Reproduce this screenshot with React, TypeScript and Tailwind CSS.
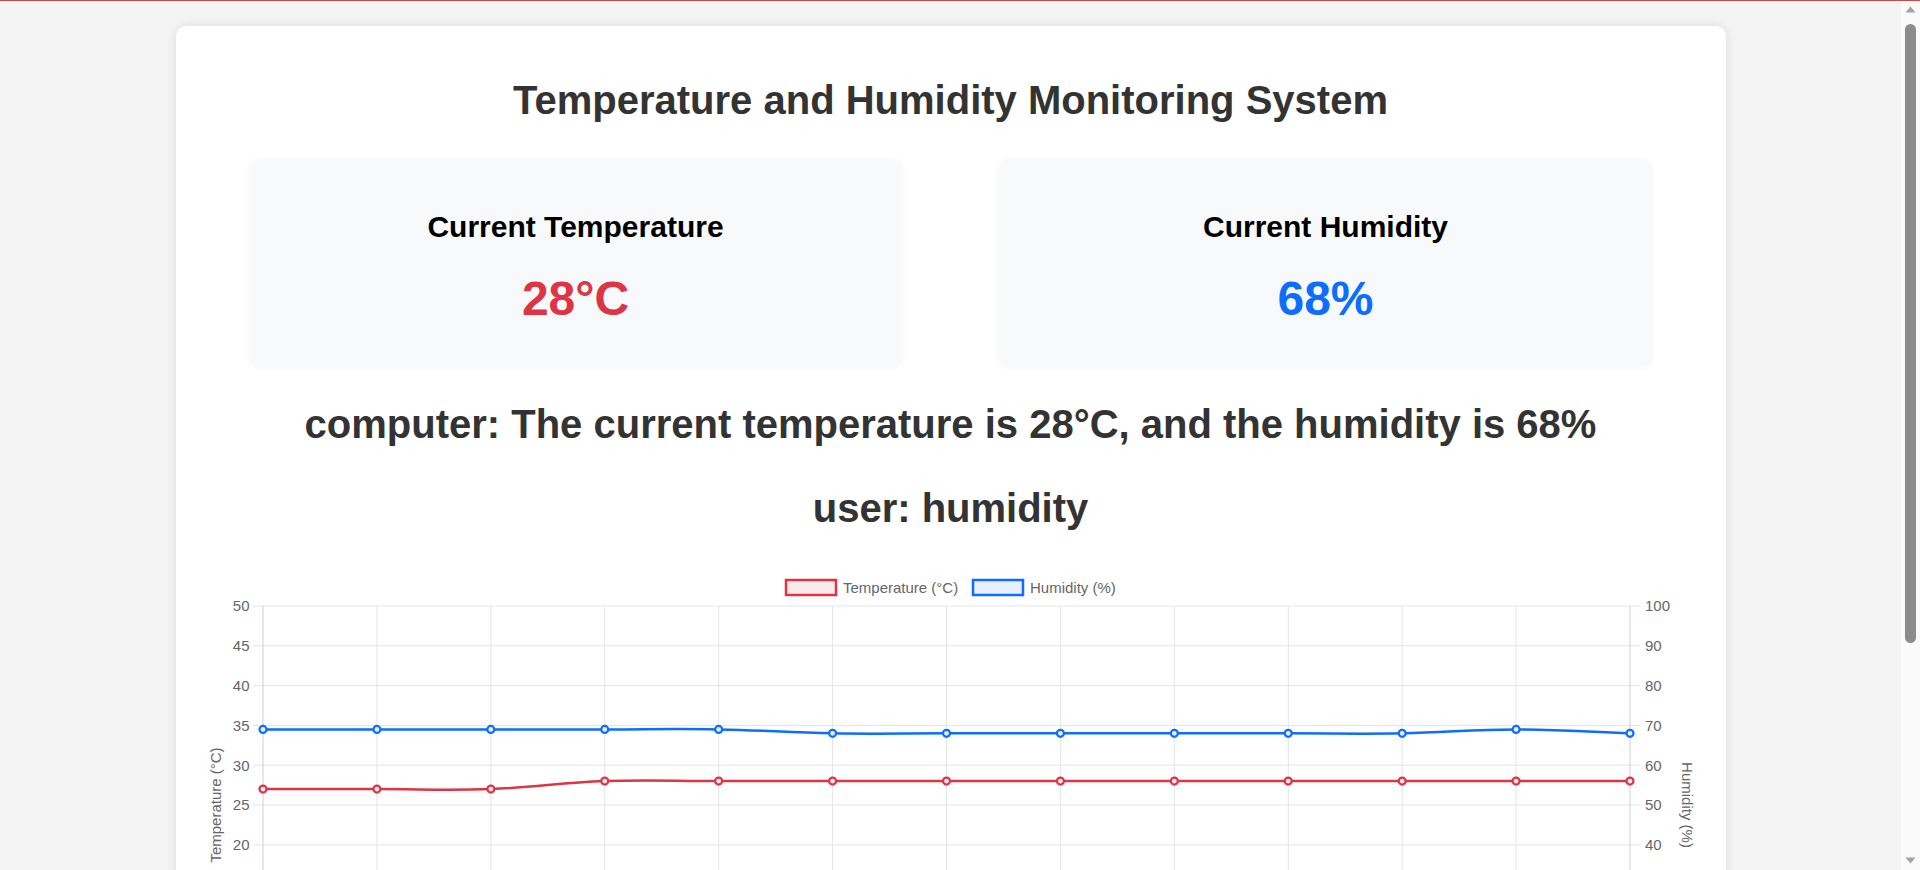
import React from "react";

type Pt = { x: number; y: number };

const temps = [27, 27, 27, 28, 28, 28, 28, 28, 28, 28, 28, 28, 28];
const hums = [69, 69, 69, 69, 69, 68, 68, 68, 68, 68, 68, 69, 68];
const times = [
  "14:20:01", "14:20:06", "14:20:11", "14:20:16", "14:20:21", "14:20:26", "14:20:31",
  "14:20:36", "14:20:41", "14:20:46", "14:20:51", "14:20:56", "14:21:01",
];

const X0 = 62;
const X1 = 1429;
const Y0 = 46;
const STEP = 39.8;
const Y1 = Y0 + STEP * 10;
const DX = (X1 - X0) / 12;

function splinePath(pts: Pt[], t = 0.4): string {
  const cps = pts.map((p, i) => {
    const prev = pts[i - 1] ?? p;
    const next = pts[i + 1] ?? p;
    const d01 = Math.hypot(p.x - prev.x, p.y - prev.y);
    const d12 = Math.hypot(next.x - p.x, next.y - p.y);
    let s01 = d01 / (d01 + d12);
    let s12 = d12 / (d01 + d12);
    if (isNaN(s01)) s01 = 0;
    if (isNaN(s12)) s12 = 0;
    const fa = t * s01;
    const fb = t * s12;
    return {
      c1: { x: p.x - fa * (next.x - prev.x), y: p.y - fa * (next.y - prev.y) },
      c2: { x: p.x + fb * (next.x - prev.x), y: p.y + fb * (next.y - prev.y) },
    };
  });
  let d = `M${pts[0].x},${pts[0].y}`;
  for (let i = 1; i < pts.length; i++) {
    const a = cps[i - 1].c2;
    const b = cps[i].c1;
    d += ` C${a.x},${a.y} ${b.x},${b.y} ${pts[i].x},${pts[i].y}`;
  }
  return d;
}

function Chart() {
  const tPts = temps.map((v, i) => ({ x: X0 + i * DX, y: Y0 + ((50 - v) / 5) * STEP }));
  const hPts = hums.map((v, i) => ({ x: X0 + i * DX, y: Y0 + ((100 - v) / 10) * STEP }));
  const font = "'Liberation Sans', Arial, sans-serif";
  return (
    <svg width={1500} height={564} viewBox="0 0 1500 564" className="block" style={{ fontFamily: font }}>
      {/* legend */}
      <rect x={585} y={20} width={50} height={15} fill="rgba(220,53,69,0.1)" stroke="#dc3545" strokeWidth={2.5} />
      <text x={642} y={32.5} fontSize={15} fill="#666">Temperature (°C)</text>
      <rect x={772} y={20} width={50} height={15} fill="rgba(13,110,253,0.1)" stroke="#0d6efd" strokeWidth={2.5} />
      <text x={829} y={32.5} fontSize={15} fill="#666">Humidity (%)</text>

      {/* horizontal grid */}
      {Array.from({ length: 11 }).map((_, k) => (
        <line key={"h" + k} x1={52} x2={1439} y1={Y0 + k * STEP} y2={Y0 + k * STEP} stroke="#e5e5e5" strokeWidth={1} />
      ))}
      {/* vertical grid */}
      {Array.from({ length: 13 }).map((_, i) => (
        <line
          key={"v" + i}
          x1={X0 + i * DX}
          x2={X0 + i * DX}
          y1={Y0}
          y2={Y1 + 10}
          stroke={i === 0 || i === 12 ? "#d0d0d0" : "#e5e5e5"}
          strokeWidth={1}
        />
      ))}
      <line x1={X0} x2={X1} y1={Y1} y2={Y1} stroke="#d0d0d0" strokeWidth={1} />

      {/* left ticks */}
      {Array.from({ length: 11 }).map((_, k) => (
        <text key={"l" + k} x={48.5} y={Y0 + k * STEP + 5.3} fontSize={15} fill="#666" textAnchor="end">
          {50 - k * 5}
        </text>
      ))}
      {/* right ticks */}
      {Array.from({ length: 11 }).map((_, k) => (
        <text key={"r" + k} x={1444} y={Y0 + k * STEP + 5.3} fontSize={15} fill="#666">
          {100 - k * 10}
        </text>
      ))}
      {/* x ticks */}
      {times.map((t, i) => (
        <text key={"x" + i} x={X0 + i * DX} y={Y1 + 28} fontSize={15} fill="#666" textAnchor="middle">
          {t}
        </text>
      ))}
      <text x={(X0 + X1) / 2} y={Y1 + 62} fontSize={15} fill="#666" textAnchor="middle">
        Time
      </text>

      {/* axis titles */}
      <text
        x={0}
        y={0}
        fontSize={15}
        fill="#666"
        textAnchor="middle"
        transform={`translate(19.5 ${(Y0 + Y1) / 2}) rotate(-90)`}
      >
        Temperature (°C)
      </text>
      <text
        x={0}
        y={0}
        fontSize={15}
        fill="#666"
        textAnchor="middle"
        transform={`translate(1481 ${(Y0 + Y1) / 2}) rotate(90)`}
      >
        Humidity (%)
      </text>

      {/* lines */}
      <path d={splinePath(tPts)} fill="none" stroke="#dc3545" strokeWidth={2.5} />
      <path d={splinePath(hPts)} fill="none" stroke="#0d6efd" strokeWidth={2.5} />
      {tPts.map((p, i) => (
        <circle key={"tp" + i} cx={p.x} cy={p.y} r={3.5} fill="#fbeaec" stroke="#dc3545" strokeWidth={2.2} />
      ))}
      {hPts.map((p, i) => (
        <circle key={"hp" + i} cx={p.x} cy={p.y} r={3.5} fill="#e7f0ff" stroke="#0d6efd" strokeWidth={2.2} />
      ))}
    </svg>
  );
}

function StatBox({ label, value, color }: { label: string; value: string; color: string }) {
  return (
    <div className="w-[652px] rounded-[10px] bg-[#f8f9fa] pt-[50px] pb-[41px] text-center shadow-[0_0_6px_rgba(0,0,0,0.05)]">
      <h2 className="text-[30px] leading-[34px] font-bold text-black">{label}</h2>
      <div className={`mt-[27px] text-[48px] leading-[55px] font-bold ${color}`}>{value}</div>
    </div>
  );
}

function ScrollBar() {
  return (
    <div className="flex w-[19px] shrink-0 flex-col items-center bg-[#fafafa] pt-[5px] pb-[6px]">
      <svg width={11} height={7} viewBox="0 0 11 7" className="block">
        <path d="M5.5 0.5 L10.5 6.5 L0.5 6.5 Z" fill="#a3a3a3" />
      </svg>
      <div className="mt-[11px] h-[619px] w-[11px] rounded-full bg-[#8c8c8c]" />
      <div className="flex-1" />
      <svg width={11} height={7} viewBox="0 0 11 7" className="block">
        <path d="M0.5 0.5 L10.5 0.5 L5.5 6.5 Z" fill="#a3a3a3" />
      </svg>
    </div>
  );
}

export default function App() {
  return (
    <div className="flex h-screen flex-col border-t border-[#c94a4a] bg-[#f4f4f4] font-['Liberation_Sans',Arial,sans-serif]">
      <div className="flex min-h-0 flex-1">
        <main className="min-w-0 flex-1 overflow-hidden">
          <div className="pt-[25px] pb-[26px]">
            <div className="mx-auto w-[1550px] rounded-[10px] bg-white p-[25px] shadow-[0_0_12px_rgba(0,0,0,0.1)]">
              <h1 className="mt-[26px] text-center text-[40px] leading-[46px] font-bold text-[#333]">
                Temperature and Humidity Monitoring System
              </h1>
              <div className="mt-[37px] flex justify-around">
                <StatBox label="Current Temperature" value="28°C" color="text-[#dc3545]" />
                <StatBox label="Current Humidity" value="68%" color="text-[#0d6efd]" />
              </div>
              <p className="mt-[34px] text-center text-[40px] leading-[46px] font-bold text-[#333]">
                computer: The current temperature is 28°C, and the humidity is 68%
              </p>
              <p className="mt-[38px] text-center text-[40px] leading-[46px] font-bold text-[#333]">user: humidity</p>
              <div className="mt-[29px]">
                <Chart />
              </div>
            </div>
          </div>
        </main>
        <ScrollBar />
      </div>
    </div>
  );
}
